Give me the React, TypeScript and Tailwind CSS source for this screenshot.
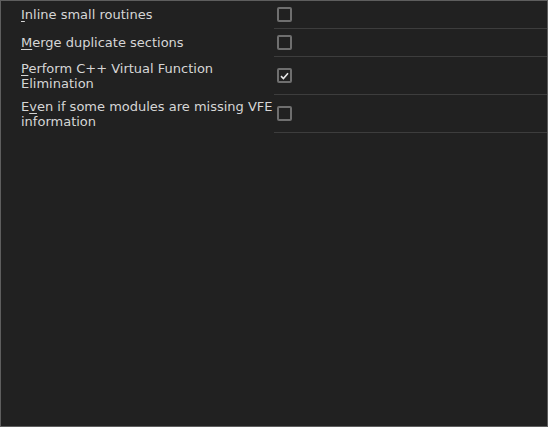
import { Fragment } from "react";

const rows = [
  { pre: "", key: "I", lines: ["nline small routines"], h: "h-[28px]", checked: false },
  { pre: "", key: "M", lines: ["erge duplicate sections"], h: "h-[28px]", checked: false },
  { pre: "", key: "P", lines: ["erform C++ Virtual Function", "Elimination"], h: "h-[38px]", checked: true },
  { pre: "E", key: "v", lines: ["en if some modules are missing VFE", "information"], h: "h-[38px]", checked: false },
];

function Box({ checked }: { checked: boolean }) {
  return (
    <div className="w-[15px] h-[15px] border-2 border-[#6f6f6f] rounded-[2px] flex items-center justify-center">
      {checked && (
        <svg width="9" height="8" viewBox="0 0 9 8" fill="none">
          <path d="M1 4.2 L3.4 6.5 L8 1.2" stroke="#e6e6e6" strokeWidth="1.6" />
        </svg>
      )}
    </div>
  );
}

export default function App() {
  return (
    <div
      className="w-[548px] h-[427px] bg-[#212121] border border-[#5e5e5e] text-[#d6d6d6] text-[13px] leading-[15px]"
      style={{ fontFamily: '"DejaVu Sans", Verdana, sans-serif' }}
    >
      {rows.map((r, i) => (
        <div key={i} className={`flex ${r.h}`}>
          <div className="w-[273px] pl-[20px] flex items-center whitespace-nowrap">
            <span className="pb-[1px]">
              {r.pre}
              <span className="underline underline-offset-2">{r.key}</span>
              {r.lines.map((l, j) => (
                <Fragment key={j}>
                  {j > 0 && <br />}
                  {l}
                </Fragment>
              ))}
            </span>
          </div>
          <div className="flex-1 border-b border-[#3d3d3d] flex items-center pl-[3px]">
            <Box checked={r.checked} />
          </div>
        </div>
      ))}
    </div>
  );
}
